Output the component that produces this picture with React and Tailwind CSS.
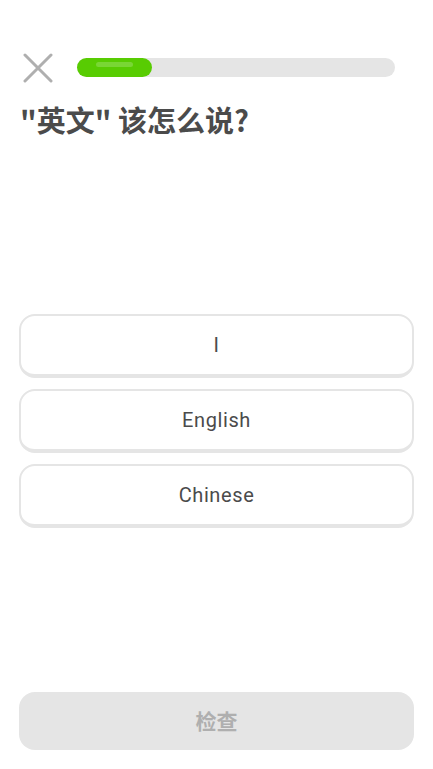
import { useState } from "react";

const options = ["I", "English", "Chinese"];

function CloseIcon() {
  return (
    <svg width="30" height="30" viewBox="0 0 30 30" fill="none">
      <path d="M2 2L28 28M28 2L2 28" stroke="#afafaf" strokeWidth="3" strokeLinecap="round" />
    </svg>
  );
}

export default function App() {
  const [picked, setPicked] = useState(null);

  return (
    <div
      className="h-[769px] w-full flex flex-col bg-white px-[19px]"
      style={{ fontFamily: 'Roboto, "Noto Sans CJK SC", sans-serif' }}
    >
      <div className="flex items-center pt-[50px] h-[85px] pl-[4px] pr-[19px]">
        <button className="w-[30px] h-[30px] flex items-center justify-center">
          <CloseIcon />
        </button>
        <div className="relative flex-1 ml-[24px] h-[19px] rounded-full bg-[#e5e5e5]">
          <div className="relative h-full w-[75px] rounded-full bg-[#58cc02]">
            <div className="absolute left-[19px] top-[4px] h-[5px] w-[37px] rounded-full bg-[#79d635]" />
          </div>
        </div>
      </div>

      <h1
        className="mt-[17px] pl-[1px] text-[29px] leading-[34px] font-bold text-[#4b4b4b]"
        style={{ fontFamily: '"Noto Sans CJK SC", "Noto Sans", sans-serif' }}
      >
        "英文" 该怎么说?
      </h1>

      <div className="mt-[178px] flex flex-col gap-[11px]">
        {options.map((o) => (
          <button
            key={o}
            onClick={() => setPicked(o)}
            className={
              "h-[64px] w-full rounded-[16px] border-2 border-b-4 flex items-center justify-center text-[20px] text-[#4b4b4b] tracking-[0.6px] " +
              (picked === o ? "border-[#84d8ff] bg-[#ddf4ff]" : "border-[#e5e5e5] bg-white")
            }
          >
            {o}
          </button>
        ))}
      </div>

      <div className="flex-1" />

      <button
        className="mb-[19px] h-[58px] w-full rounded-[16px] bg-[#e5e5e5] text-[21px] font-bold text-[#afafaf]"
        style={{ fontFamily: '"Noto Sans CJK SC", "Noto Sans", sans-serif' }}
      >
        检查
      </button>
    </div>
  );
}
